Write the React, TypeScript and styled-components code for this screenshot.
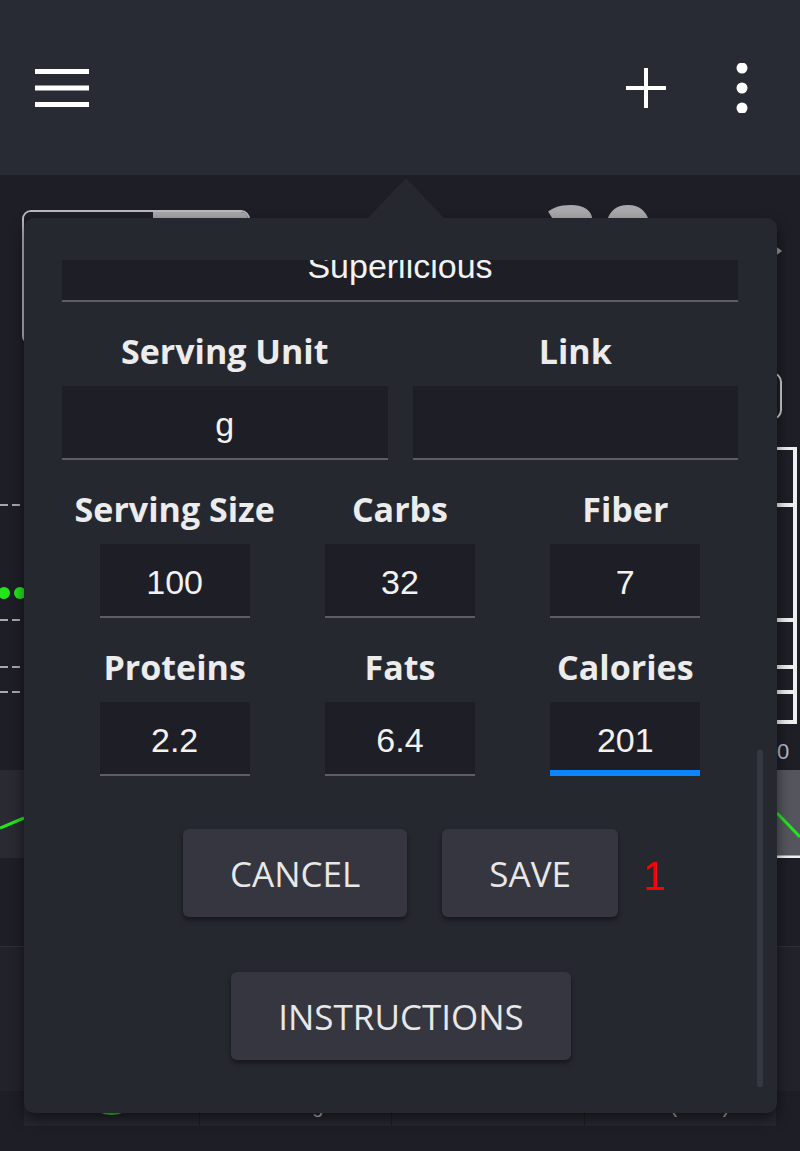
import React, { useState } from "react";
import styled, { createGlobalStyle } from "styled-components";

const GlobalStyle = createGlobalStyle`
  html, body {
    margin: 0;
    padding: 0;
    background: #1e1f26;
  }
  body {
    font-family: "Open Sans", "Liberation Sans", sans-serif;
  }
  * {
    box-sizing: border-box;
  }
`;

const Page = styled.div`
  position: relative;
  width: 800px;
  height: 1151px;
  overflow: hidden;
  background: #1e1f26;
`;

/* ---------- top bar ---------- */

const TopBar = styled.header`
  height: 175px;
  background: #292b34;
  display: flex;
  align-items: center;
  justify-content: space-between;
  padding: 0 52px 0 35px;
`;

const Actions = styled.div`
  display: flex;
  align-items: center;
  gap: 69px;
`;

const IconButton = styled.button`
  border: 0;
  background: none;
  padding: 0;
  display: flex;
  color: #ffffff;
`;

/* ---------- page behind the popup ---------- */

const Summary = styled.section`
  height: 272px;
  display: flex;
  align-items: flex-start;
  padding: 35px 0 0 22px;
`;

const Toggle = styled.div`
  width: 228px;
  height: 135px;
  display: flex;
  border: 2px solid #b9b9bd;
  border-radius: 9px;
  overflow: hidden;
`;

const ToggleHalf = styled.div<{ $on?: boolean }>`
  flex: ${(p) => (p.$on ? "0 0 95px" : "1")};
  background: ${(p) => (p.$on ? "#a7a7ab" : "#1e1f26")};
`;

const BigNumber = styled.div`
  margin: -30px 0 0 295px;
  font-family: "Open Sans", sans-serif;
  font-weight: 800;
  font-size: 90px;
  line-height: 110px;
  color: #a9a9ad;
  letter-spacing: 4px;
`;

const SideControls = styled.div`
  margin-left: auto;
  padding-right: 18px;
  display: flex;
  flex-direction: column;
  align-items: flex-end;
`;

const Arrow = styled.div`
  margin-top: 35px;
  border-top: 6px solid transparent;
  border-bottom: 6px solid transparent;
  border-left: 8px solid #9a9a9f;
`;

const Pill = styled.div`
  margin-top: 115px;
  width: 120px;
  height: 48px;
  border: 2px solid #cfcfd3;
  border-radius: 10px;
`;

const ChartBlock = styled.svg`
  display: block;
`;

const Gap = styled.div`
  height: 89px;
  border-bottom: 1px solid #2e3038;
`;

const Lower = styled.div`
  height: 144px;
  background: #22232a;
`;

const TableRow = styled.div`
  margin: 0 24px;
  height: 35px;
  display: grid;
  grid-template-columns: 176px 192px 193px 1fr;
  background: #262830;
`;

const TableCell = styled.div`
  display: flex;
  justify-content: center;
  align-items: flex-start;
  border-right: 1px solid #1e1f26;
  color: #bdbdc2;
  font-family: "Liberation Sans", sans-serif;
  font-size: 20px;
  line-height: 14px;
  padding-top: 8px;
  &:last-child {
    border-right: 0;
  }
`;

const StatusDot = styled.span`
  width: 35px;
  height: 18px;
  margin-top: -2px;
  border-radius: 50%;
  background: #22e61c;
`;

/* ---------- popup ---------- */

const Popup = styled.div`
  position: absolute;
  left: 24px;
  top: 218px;
  width: 753px;
  height: 895px;
  background: #262830;
  border-radius: 10px;
  box-shadow: 0 6px 14px rgba(0, 0, 0, 0.55);
  display: flex;
  padding: 42px 14px 26px 38px;

  &::before {
    content: "";
    position: absolute;
    left: 344px;
    top: -40px;
    border-left: 38px solid transparent;
    border-right: 38px solid transparent;
    border-bottom: 40px solid #262830;
  }
`;

const Scroller = styled.div`
  flex: 1;
  min-width: 0;
  overflow: hidden;
  display: flex;
  flex-direction: column;
  justify-content: flex-end;
  padding-bottom: 27px;
`;

const Track = styled.div`
  width: 6px;
  margin-left: 19px;
  display: flex;
  flex-direction: column;
  justify-content: flex-end;
`;

const Thumb = styled.div`
  height: 337px;
  background: #363841;
  border-radius: 2px;
`;

const Row = styled.div<{ $cols: number }>`
  display: grid;
  grid-template-columns: repeat(${(p) => p.$cols}, 1fr);
  column-gap: ${(p) => (p.$cols === 2 ? "25px" : "0")};
  margin-top: 29px;
  flex-shrink: 0;
`;

const Field = styled.label`
  display: flex;
  flex-direction: column;
  align-items: center;
`;

const Label = styled.span`
  height: 40px;
  line-height: 40px;
  margin-bottom: 15px;
  font-family: "Open Sans", sans-serif;
  font-weight: 700;
  font-size: 34px;
  color: #ececec;
  white-space: nowrap;
`;

const Input = styled.input<{ $narrow?: boolean; $focused?: boolean }>`
  width: ${(p) => (p.$narrow ? "150px" : "100%")};
  height: 74px;
  border: 0;
  border-bottom: ${(p) => (p.$focused ? "6px solid #0a84ff" : "2px solid #5c5d65")};
  border-radius: 0;
  background: #1e1f26;
  color: #f2f2f2;
  font-family: "Liberation Sans", Arial, sans-serif;
  font-size: 34px;
  text-align: center;
  padding: ${(p) => (p.$focused ? "8px 0 0" : "5px 0 0")};
  outline: none;
`;

const ButtonRow = styled.div`
  display: flex;
  justify-content: center;
  align-items: center;
  gap: 35px;
  margin-top: 53px;
  padding-left: 46px;
  flex-shrink: 0;
`;

const Button = styled.button`
  height: 88px;
  padding: 0 47px;
  border: 0;
  border-radius: 6px;
  background: #35363f;
  box-shadow: 0 3px 5px rgba(0, 0, 0, 0.45);
  color: #e8e8e8;
  font-family: "Open Sans", sans-serif;
  font-size: 35px;
  font-weight: 400;
  text-transform: uppercase;
`;

const Counter = styled.span`
  width: 20px;
  margin: 6px 0 0 -10px;
  color: #ff0000;
  font-family: "Liberation Sans", sans-serif;
  font-size: 40px;
`;

const Centered = styled.div`
  display: flex;
  justify-content: center;
  margin-top: 55px;
  padding-left: 2px;
  flex-shrink: 0;
`;

/* ---------- icons ---------- */

const MenuIcon = () => (
  <svg width="54" height="40" viewBox="0 0 54 40">
    <rect x="0" y="1" width="54" height="5" fill="#fff" />
    <rect x="0" y="17.5" width="54" height="5" fill="#fff" />
    <rect x="0" y="34" width="54" height="5" fill="#fff" />
  </svg>
);

const PlusIcon = () => (
  <svg width="42" height="42" viewBox="0 0 42 42">
    <path d="M21 1v40M1 21h40" stroke="#fff" strokeWidth="4" />
  </svg>
);

const DotsIcon = () => (
  <svg width="12" height="50" viewBox="0 0 12 50">
    <circle cx="6" cy="5" r="5.5" fill="#fff" />
    <circle cx="6" cy="25" r="5.5" fill="#fff" />
    <circle cx="6" cy="45" r="5.5" fill="#fff" />
  </svg>
);

const Chart = () => (
  <ChartBlock width="800" height="411" viewBox="0 0 800 411">
    {[58, 173, 220, 245].map((y) => (
      <line key={y} x1="0" x2="777" y1={y} y2={y} stroke="#d6d6d6" strokeWidth="1.5" strokeDasharray="8 4" />
    ))}
    <path d="M777 1H795V275H777M777 58H795M777 173H795M777 220H795M777 245H795" fill="none" stroke="#eeeeee" strokeWidth="4" />
    <circle cx="4" cy="146" r="6" fill="#22e61c" />
    <circle cx="20" cy="146" r="6" fill="#22e61c" />
    <text x="777" y="312" fill="#bcbcc0" fontSize="22" fontFamily="Liberation Sans, sans-serif">0</text>
    <rect x="0" y="323" width="800" height="88" fill="#292a32" />
    <rect x="777" y="323" width="23" height="86" fill="#55565d" />
    <line x1="777" x2="800" y1="410" y2="410" stroke="#f0f0f0" strokeWidth="3" />
    <path d="M0 381L24 371M777 366L800 390" stroke="#22e61c" strokeWidth="3" fill="none" />
  </ChartBlock>
);

export default function App() {
  const [calories, setCalories] = useState("201");

  return (
    <Page>
      <GlobalStyle />
      <TopBar>
        <IconButton aria-label="Menu">
          <MenuIcon />
        </IconButton>
        <Actions>
          <IconButton aria-label="Add">
            <PlusIcon />
          </IconButton>
          <IconButton aria-label="More">
            <DotsIcon />
          </IconButton>
        </Actions>
      </TopBar>

      <Summary>
        <Toggle>
          <ToggleHalf />
          <ToggleHalf $on />
        </Toggle>
        <BigNumber>30</BigNumber>
        <SideControls>
          <Arrow />
          <Pill />
        </SideControls>
      </Summary>
      <Chart />
      <Gap />
      <Lower />
      <TableRow>
        <TableCell>
          <StatusDot />
        </TableCell>
        <TableCell>102.0 mg/dL</TableCell>
        <TableCell>5.2%</TableCell>
        <TableCell>201 (5.0%)</TableCell>
      </TableRow>

      <Popup>
        <Scroller>
          <Field>
            <Label>Name</Label>
            <Input defaultValue="Superlicious" />
          </Field>
          <Row $cols={2}>
            <Field>
              <Label>Serving Unit</Label>
              <Input defaultValue="g" />
            </Field>
            <Field>
              <Label>Link</Label>
              <Input defaultValue="" />
            </Field>
          </Row>
          <Row $cols={3}>
            <Field>
              <Label>Serving Size</Label>
              <Input $narrow defaultValue="100" />
            </Field>
            <Field>
              <Label>Carbs</Label>
              <Input $narrow defaultValue="32" />
            </Field>
            <Field>
              <Label>Fiber</Label>
              <Input $narrow defaultValue="7" />
            </Field>
          </Row>
          <Row $cols={3}>
            <Field>
              <Label>Proteins</Label>
              <Input $narrow defaultValue="2.2" />
            </Field>
            <Field>
              <Label>Fats</Label>
              <Input $narrow defaultValue="6.4" />
            </Field>
            <Field>
              <Label>Calories</Label>
              <Input
                $narrow
                $focused
                value={calories}
                onChange={(e) => setCalories(e.target.value)}
              />
            </Field>
          </Row>
          <ButtonRow>
            <Button>Cancel</Button>
            <Button>Save</Button>
            <Counter>1</Counter>
          </ButtonRow>
          <Centered>
            <Button>Instructions</Button>
          </Centered>
        </Scroller>
        <Track>
          <Thumb />
        </Track>
      </Popup>
    </Page>
  );
}
